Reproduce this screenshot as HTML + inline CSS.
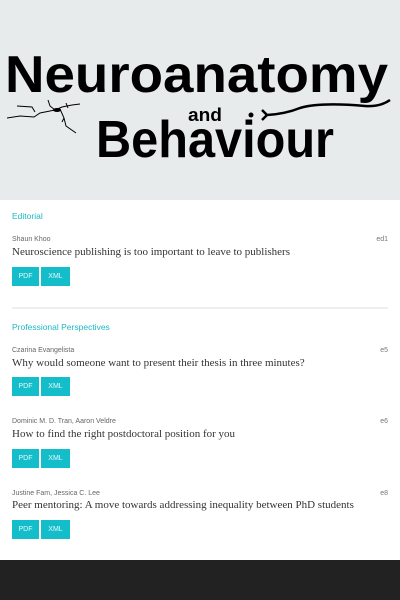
<!DOCTYPE html>
<html><head><meta charset="utf-8"><style>
*{margin:0;padding:0;box-sizing:border-box}
body{width:400px;height:600px;background:#fff;position:relative;overflow:hidden;font-family:"Liberation Sans",sans-serif}
.hdr{position:absolute;left:0;top:0;width:400px;height:200px;background:#e8ebec}
.ft{position:absolute;left:0;top:560px;width:400px;height:40px;background:#222}
.sec{position:absolute;left:12px;font-size:8.5px;color:#1ab8c8}
.au{position:absolute;left:12px;font-size:7px;color:#666}
.num{position:absolute;right:12px;font-size:7px;color:#777}
.ti{position:absolute;left:12px;font-family:"Liberation Serif",serif;font-size:11px;color:#333;white-space:nowrap}
.b{position:absolute;height:19px;background:#13bdc9;color:#e8fbfc;font-size:7px;line-height:19px;text-align:center}
.hr{position:absolute;left:12px;width:376px;top:307px;height:2px;background:#eee}
</style></head><body>
<div class="hdr">
<svg width="400" height="200" viewBox="0 0 400 200">
<text x="5" y="92" font-family="Liberation Sans" font-weight="bold" font-size="52" textLength="383" lengthAdjust="spacingAndGlyphs" fill="#000">Neuroanatomy</text>
<text x="188" y="121" font-family="Liberation Sans" font-weight="bold" font-size="18" textLength="34" lengthAdjust="spacingAndGlyphs" fill="#000">and</text>
<text x="96" y="157" font-family="Liberation Sans" font-weight="bold" font-size="52" textLength="238" lengthAdjust="spacingAndGlyphs" fill="#000">Behaviour</text>
<circle cx="251" cy="115" r="2.5" fill="#000"/>
<path d="M262 110 L267 115 L262 120 M267 115 Q285 114 300 108 Q320 102 365 106 Q380 107 390 100" stroke="#000" stroke-width="2.5" fill="none"/>
<path d="M7 118 L20 116 L34 117 L40 113 L55 110 M17 106 L32 107 L35 112 M55 110 L62 107 L72 105 L80 104 M48 100 L50 106 L55 110 M60 109 L64 118 L66 126 L76 133 M64 118 L62 122 M66 103 L68 108" stroke="#000" stroke-width="1" fill="none"/>
<ellipse cx="57" cy="110" rx="4" ry="2" fill="#000"/>
</svg>
</div>
<div class="sec" style="top:211px">Editorial</div>
<div class="au" style="top:236px">Shaun Khoo</div><div class="num" style="top:236px">ed1</div>
<div class="ti" style="top:246px">Neuroscience publishing is too important to leave to publishers</div>
<div class="b" style="left:12px;width:27px;top:267px">PDF</div><div class="b" style="left:41px;width:29px;top:267px">XML</div>
<div class="hr"></div>
<div class="sec" style="top:322px">Professional Perspectives</div>
<div class="au" style="top:347px">Czarina Evangelista</div><div class="num" style="top:347px">e5</div>
<div class="ti" style="top:357px">Why would someone want to present their thesis in three minutes?</div>
<div class="b" style="left:12px;width:27px;top:377px">PDF</div><div class="b" style="left:41px;width:29px;top:377px">XML</div>
<div class="au" style="top:418px">Dominic M. D. Tran, Aaron Veldre</div><div class="num" style="top:418px">e6</div>
<div class="ti" style="top:428px">How to find the right postdoctoral position for you</div>
<div class="b" style="left:12px;width:27px;top:449px">PDF</div><div class="b" style="left:41px;width:29px;top:449px">XML</div>
<div class="au" style="top:490px">Justine Fam, Jessica C. Lee</div><div class="num" style="top:490px">e8</div>
<div class="ti" style="top:499px">Peer mentoring: A move towards addressing inequality between PhD students</div>
<div class="b" style="left:12px;width:27px;top:520px">PDF</div><div class="b" style="left:41px;width:29px;top:520px">XML</div>
<div class="ft"></div>
</body></html>
